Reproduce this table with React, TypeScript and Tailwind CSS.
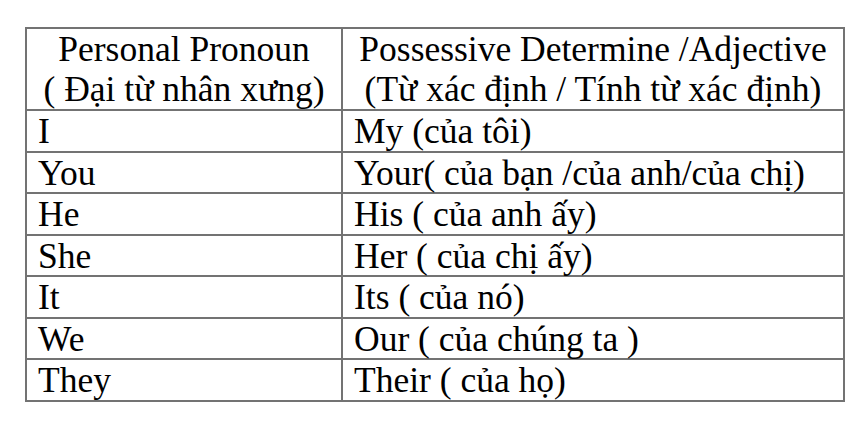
export default function App() {
  const rows: [string, string][] = [
    ["I", "My (của tôi)"],
    ["You", "Your( của bạn /của anh/của chị)"],
    ["He", "His ( của anh ấy)"],
    ["She", "Her ( của chị ấy)"],
    ["It", "Its ( của nó)"],
    ["We", "Our ( của chúng ta )"],
    ["They", "Their ( của họ)"],
  ];
  return (
    <div
      className="w-[866px] h-[426px] bg-white pl-[25px] pt-[27px] text-black"
      style={{ fontFamily: '"Liberation Serif", "Times New Roman", serif' }}
    >
      <div className="w-[820px] border-2 border-[#737373] text-[35.5px]">
        <div className="flex h-[80px]">
          <div className="w-[316px] border-r-2 border-[#737373] text-center leading-[40px] whitespace-nowrap">
            <div>Personal Pronoun</div>
            <div>( Đại từ nhân xưng)</div>
          </div>
          <div className="flex-1 text-center leading-[40px] whitespace-nowrap">
            <div>Possessive Determine /Adjective</div>
            <div>(Từ xác định / Tính từ xác định)</div>
          </div>
        </div>
        {rows.map(([a, b]) => (
          <div key={a} className="flex h-[41.5px] border-t-2 border-[#737373]">
            <div className="w-[316px] border-r-2 border-[#737373] pl-[11px] pt-[1px] leading-[38.5px] whitespace-nowrap">
              {a}
            </div>
            <div className="flex-1 pl-[11px] pt-[1px] leading-[38.5px] whitespace-nowrap">
              {b}
            </div>
          </div>
        ))}
      </div>
    </div>
  );
}
